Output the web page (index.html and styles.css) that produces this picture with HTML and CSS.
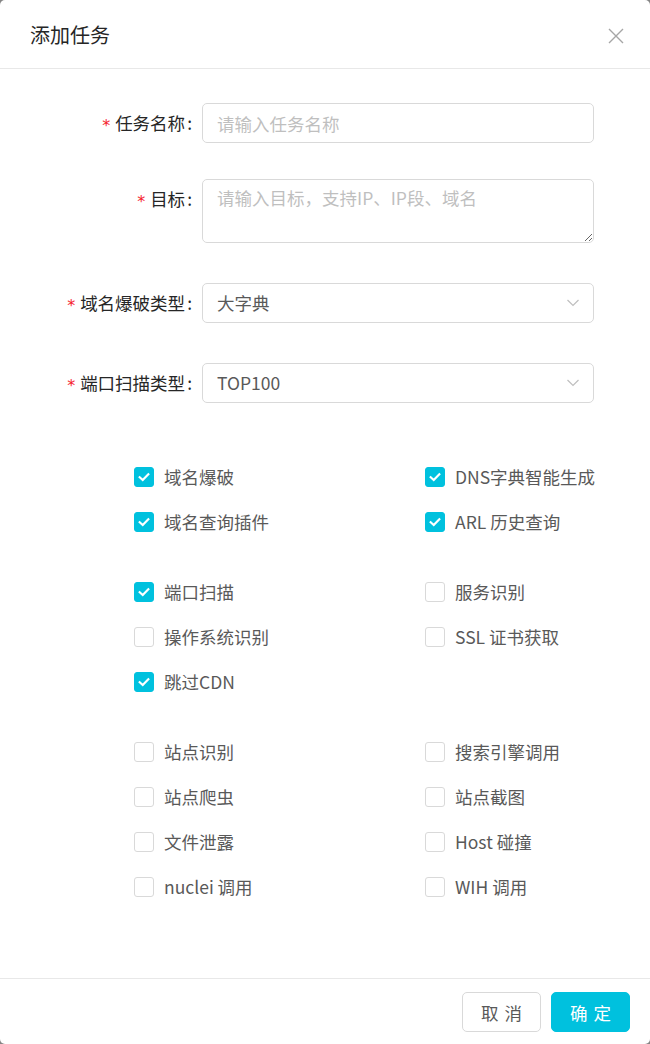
FILE: index.html
```html
<!DOCTYPE html>
<html lang="zh-CN">
<head>
<meta charset="utf-8">
<title>添加任务</title>
<link rel="stylesheet" href="styles.css">
</head>
<body>
<div class="modal">
  <div class="modal-header">
    <div class="modal-title">添加任务</div>
    <button class="modal-close" type="button" aria-label="关闭">
      <svg width="16" height="16" viewBox="0 0 16 16"><path d="M1 1L15 15M15 1L1 15" stroke="#a6a6a6" stroke-width="1.4" fill="none"/></svg>
    </button>
  </div>
  <div class="modal-body">
    <form class="form">
      <div class="form-item">
        <label class="form-label required">任务名称</label>
        <div class="form-control"><input class="input" type="text" placeholder="请输入任务名称"></div>
      </div>
      <div class="form-item form-item-area">
        <label class="form-label required">目标</label>
        <div class="form-control"><textarea class="input textarea" placeholder="请输入目标，支持IP、IP段、域名"></textarea></div>
      </div>
      <div class="form-item">
        <label class="form-label required">域名爆破类型</label>
        <div class="form-control">
          <div class="select"><span class="select-value">大字典</span>
            <svg class="select-arrow" width="12" height="8" viewBox="0 0 12 8"><path d="M0.5 1L6 6.5L11.5 1" stroke="#bfbfbf" stroke-width="1.2" fill="none"/></svg>
          </div>
        </div>
      </div>
      <div class="form-item">
        <label class="form-label required">端口扫描类型</label>
        <div class="form-control">
          <div class="select"><span class="select-value">TOP100</span>
            <svg class="select-arrow" width="12" height="8" viewBox="0 0 12 8"><path d="M0.5 1L6 6.5L11.5 1" stroke="#bfbfbf" stroke-width="1.2" fill="none"/></svg>
          </div>
        </div>
      </div>

      <div class="checks">
        <div class="check-group">
          <label class="check"><span class="box checked"><svg viewBox="0 0 20 20"><path d="M5.2 10.2L8.6 13.4L14.8 6.9" /></svg></span><span class="check-text">域名爆破</span></label>
          <label class="check"><span class="box checked"><svg viewBox="0 0 20 20"><path d="M5.2 10.2L8.6 13.4L14.8 6.9" /></svg></span><span class="check-text">DNS字典智能生成</span></label>
          <label class="check"><span class="box checked"><svg viewBox="0 0 20 20"><path d="M5.2 10.2L8.6 13.4L14.8 6.9" /></svg></span><span class="check-text">域名查询插件</span></label>
          <label class="check"><span class="box checked"><svg viewBox="0 0 20 20"><path d="M5.2 10.2L8.6 13.4L14.8 6.9" /></svg></span><span class="check-text">ARL 历史查询</span></label>
        </div>
        <div class="check-group">
          <label class="check"><span class="box checked"><svg viewBox="0 0 20 20"><path d="M5.2 10.2L8.6 13.4L14.8 6.9" /></svg></span><span class="check-text">端口扫描</span></label>
          <label class="check"><span class="box"></span><span class="check-text">服务识别</span></label>
          <label class="check"><span class="box"></span><span class="check-text">操作系统识别</span></label>
          <label class="check"><span class="box"></span><span class="check-text">SSL 证书获取</span></label>
          <label class="check"><span class="box checked"><svg viewBox="0 0 20 20"><path d="M5.2 10.2L8.6 13.4L14.8 6.9" /></svg></span><span class="check-text">跳过CDN</span></label>
        </div>
        <div class="check-group">
          <label class="check"><span class="box"></span><span class="check-text">站点识别</span></label>
          <label class="check"><span class="box"></span><span class="check-text">搜索引擎调用</span></label>
          <label class="check"><span class="box"></span><span class="check-text">站点爬虫</span></label>
          <label class="check"><span class="box"></span><span class="check-text">站点截图</span></label>
          <label class="check"><span class="box"></span><span class="check-text">文件泄露</span></label>
          <label class="check"><span class="box"></span><span class="check-text">Host 碰撞</span></label>
          <label class="check"><span class="box"></span><span class="check-text">nuclei 调用</span></label>
          <label class="check"><span class="box"></span><span class="check-text">WIH 调用</span></label>
        </div>
      </div>
    </form>
  </div>
  <div class="modal-footer">
    <button class="btn" type="button"><span>取消</span></button>
    <button class="btn btn-primary" type="button"><span>确定</span></button>
  </div>
</div>
</body>
</html>
```

FILE: styles.css
```css
html {
  background: #858585;
}
body {
  margin: 0;
  font-family: "Noto Sans CJK SC", "Noto Sans", sans-serif;
  font-size: 17.5px;
  color: #595959;
}
.modal {
  width: 650px;
  height: 1044px;
  background: #fff;
  border-radius: 5px;
  display: flex;
  flex-direction: column;
  overflow: hidden;
}
.modal-header {
  height: 69px;
  box-sizing: border-box;
  border-bottom: 1px solid #e8e8e8;
  padding: 0 30px;
  display: flex;
  align-items: center;
  justify-content: space-between;
  position: relative;
  flex: none;
}
.modal-title {
  font-size: 20px;
  line-height: 28px;
  color: #262626;
  padding-top: 2px;
}
.modal-close {
  position: absolute;
  top: 0;
  right: 0;
  width: 70px;
  height: 70px;
  border: 0;
  background: transparent;
  padding: 0;
  display: flex;
  align-items: center;
  justify-content: center;
  cursor: pointer;
}
.modal-close svg {
  display: block;
  margin: 1px 0 0 1px;
}
.modal-body {
  flex: 1;
  padding: 34px 30px 0 30px;
}
.form-item {
  display: grid;
  grid-template-columns: 172px 392px;
  align-items: start;
  margin-bottom: 40px;
}
.form-item:first-child {
  margin-bottom: 36px;
}
.form-label {
  display: block;
  height: 40px;
  text-align: right;
  line-height: 40px;
  color: #262626;
  white-space: nowrap;
  overflow: visible;
}
.form-label.required::before {
  content: "*";
  color: #f5222d;
  margin-right: 5px;
  font-family: "DejaVu Sans", sans-serif;
  font-size: 16px;
  line-height: 1;
  display: inline-block;
  vertical-align: middle;
  position: relative;
  top: 1px;
}
.form-label::after {
  content: ":";
  margin: 0 10px 0 2px;
}
.input {
  display: block;
  box-sizing: border-box;
  width: 100%;
  height: 40px;
  border: 1px solid #d9d9d9;
  border-radius: 5px;
  padding: 5px 14px;
  font-family: inherit;
  font-size: 17.5px;
  color: #595959;
  outline: none;
  margin: 0;
}
.input::placeholder {
  color: #bfbfbf;
}
.textarea {
  height: 64px;
  line-height: 26px;
  resize: vertical;
}
.select {
  box-sizing: border-box;
  height: 40px;
  border: 1px solid #d9d9d9;
  border-radius: 5px;
  padding: 0 14px;
  display: flex;
  align-items: center;
  justify-content: space-between;
}
.select-value {
  line-height: 38px;
  color: #595959;
}
.select-arrow {
  display: block;
}
.checks {
  padding-top: 21px;
  padding-left: 104px;
}
.check-group {
  display: grid;
  grid-template-columns: 291px 1fr;
  row-gap: 19px;
  margin-bottom: 44px;
}
.check {
  display: flex;
  align-items: center;
  height: 26px;
}
.box {
  width: 20px;
  height: 20px;
  box-sizing: border-box;
  border: 1px solid #d9d9d9;
  border-radius: 3px;
  background: #fff;
  flex: none;
}
.box.checked {
  background: #00c1de;
  border-color: #00c1de;
}
.box svg {
  display: block;
  width: 18px;
  height: 18px;
  margin: 0;
}
.box svg path {
  fill: none;
  stroke: #fff;
  stroke-width: 2.4;
  stroke-linecap: square;
  stroke-linejoin: miter;
}
.check-text {
  padding: 0 10px;
  line-height: 26px;
  color: #595959;
}
.modal-footer {
  flex: none;
  border-top: 1px solid #e8e8e8;
  padding: 13px 20px 12px;
  display: flex;
  justify-content: flex-end;
  gap: 10px;
}
.btn {
  flex: none;
  height: 40px;
  padding: 0 18px;
  border: 1px solid #d9d9d9;
  border-radius: 5px;
  background: #fff;
  color: #595959;
  font-family: inherit;
  font-size: 17.5px;
  white-space: nowrap;
  cursor: pointer;
}
.btn span {
  letter-spacing: 0.34em;
  margin-right: -0.34em;
}
.btn-primary {
  background: #00c1de;
  border-color: #00c1de;
  color: #fff;
}
```
